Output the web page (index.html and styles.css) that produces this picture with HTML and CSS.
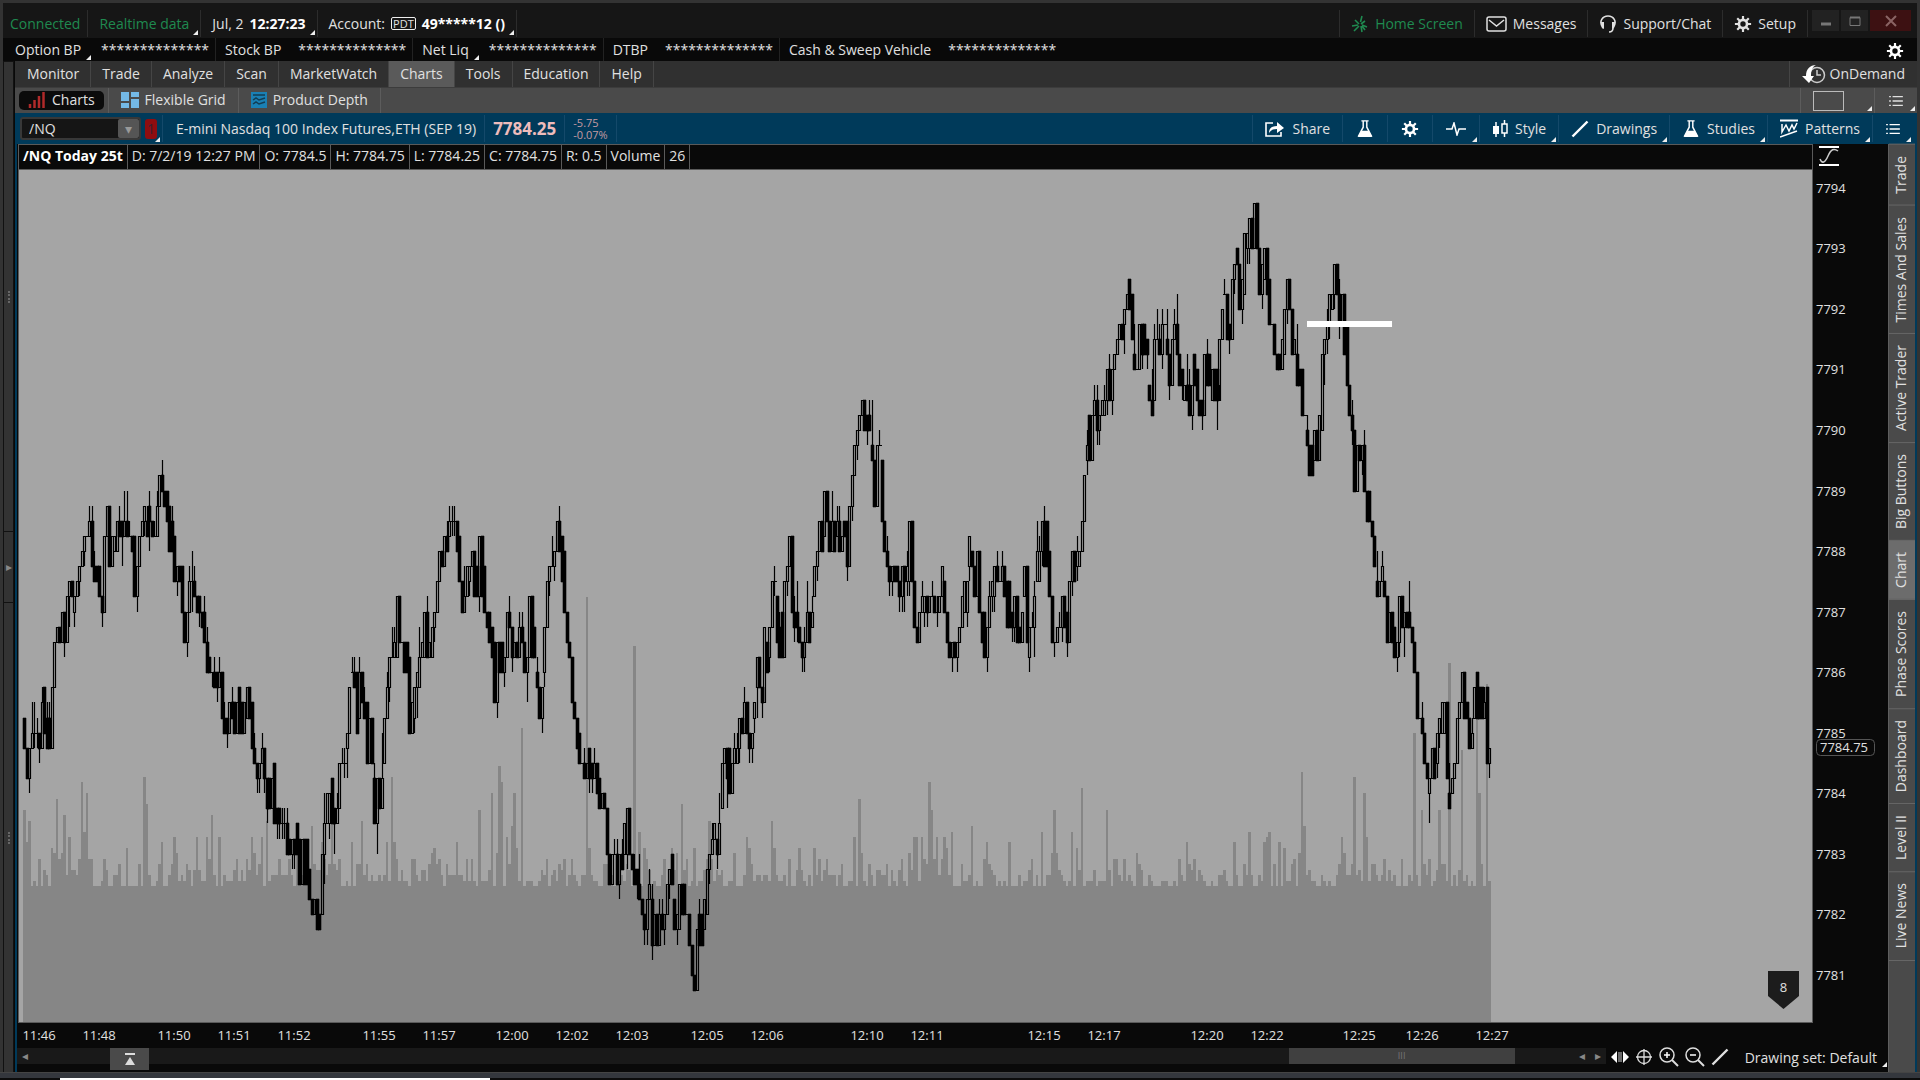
FILE: index.html
```html
<!DOCTYPE html>
<html lang="en">
  <head>
    <meta charset="utf-8">
    <title>Charts - /NQ</title>
    <meta name="viewport" content="width=device-width, initial-scale=1.0">
    <link rel="stylesheet" href="styles.css">
  </head>
  <body>
    <!-- shared icons -->
    <svg class="defs" width="0" height="0">
      <symbol id="gear" viewBox="0 0 20 20">
        <circle cx="10" cy="10" r="4.5" fill="none" stroke="currentColor" stroke-width="3"/>
        <path d="M10 1v4M10 15v4M1 10h4M15 10h4M3.6 3.6l3 3M13.4 13.4l3 3M16.4 3.6l-3 3M6.6 13.4l-3 3" stroke="currentColor" stroke-width="2.4" fill="none"/>
      </symbol>
      <symbol id="flask" viewBox="0 0 20 20">
        <path d="M6 1h8M8 1v7l-5 9.500h14L12 8V1" fill="none" stroke="currentColor" stroke-width="1.600"/>
        <path d="M6 12h8l4 7H2z" fill="currentColor"/>
      </symbol>
      <symbol id="list" viewBox="0 0 16 14">
        <path d="M0 2h2M4 2h12M0 7h2M4 7h12M0 12h2M4 12h12" stroke="currentColor" stroke-width="1.500"/>
      </symbol>
      <symbol id="pen" viewBox="0 0 18 18">
        <path d="M1.500 16.500L16.500 1.500" stroke="currentColor" stroke-width="2.400"/>
      </symbol>
    </svg>

    <div class="window">
      <header class="titlebar">
        <div class="seg green first">Connected</div>
        <div class="seg green more">Realtime data</div>
        <div class="seg more">Jul, 2 <b>12:27:23</b></div>
        <div class="seg more">Account: <span class="pdt">PDT</span> <b>49*****12 ()</b></div>
        <div class="spacer"></div>
        <button class="seg green left">
          <svg width="18" height="18" viewBox="0 0 18 18"><path d="M11 1L9.500 7M4 5l4 4M14 6l-4 3M1 11l6-1M16 12l-5-2M3 16l5-5M10 11l1 6M14 15l-3-4" stroke="currentColor" stroke-width="1.600" fill="none"/></svg>
          Home Screen
        </button>
        <button class="seg left">
          <svg width="21" height="16" viewBox="0 0 21 16"><rect x="1" y="1" width="19" height="14" rx="2" fill="none" stroke="currentColor" stroke-width="1.500"/><path d="M3 4l7.500 6L18 4" fill="none" stroke="currentColor" stroke-width="1.500"/></svg>
          Messages
        </button>
        <button class="seg left">
          <svg width="18" height="20" viewBox="0 0 18 20"><path d="M4 14C-1 7 4 2 9 2s10 5 5 12M14 14c0 3-2 4-4 4" fill="none" stroke="currentColor" stroke-width="1.600"/><path d="M2 8l3 0v7l-2-1zM16 8l-3 0v7l2-1z" fill="currentColor"/></svg>
          Support/Chat
        </button>
        <button class="seg left">
          <svg width="18" height="18"><use href="#gear"/></svg>
          Setup
        </button>
        <div class="winbtns">
          <button aria-label="Minimize"><svg width="12" height="10" viewBox="0 0 12 10"><path d="M1 8h10" stroke="#777" stroke-width="3"/></svg></button>
          <button aria-label="Maximize"><svg width="12" height="10" viewBox="0 0 12 10"><path d="M1 1.500h10v8H1z" fill="none" stroke="#777" stroke-width="1"/><path d="M1 1.500h10" stroke="#777" stroke-width="2"/></svg></button>
          <button class="close" aria-label="Close"><svg width="12" height="12" viewBox="0 0 12 12"><path d="M1 1l10 10M11 1L1 11" stroke="#8a6464" stroke-width="2"/></svg></button>
        </div>
      </header>

      <div class="balances">
        <div class="bal"><span class="more">Option BP</span><span>**************</span></div>
        <div class="bal"><span>Stock BP</span><span>**************</span></div>
        <div class="bal"><span class="more">Net Liq</span><span>**************</span></div>
        <div class="bal"><span>DTBP</span><span>**************</span></div>
        <div class="bal last"><span>Cash &amp; Sweep Vehicle</span><span>**************</span></div>
        <div class="spacer"></div>
        <button class="icon-btn" aria-label="Settings"><svg width="18" height="18"><use href="#gear"/></svg></button>
      </div>

      <div class="workspace">
        <div class="gutter">
          <div class="dots"></div>
          <button aria-label="Expand">&#9656;</button>
          <div class="dots"></div>
        </div>

        <div class="main">
          <nav class="menu">
            <a href="#">Monitor</a>
            <a href="#">Trade</a>
            <a href="#">Analyze</a>
            <a href="#">Scan</a>
            <a href="#">MarketWatch</a>
            <a href="#" class="active">Charts</a>
            <a href="#">Tools</a>
            <a href="#">Education</a>
            <a href="#">Help</a>
            <span class="spacer"></span>
            <a href="#" class="ondemand">
              <svg width="24" height="20" viewBox="0 0 24 20"><circle cx="15" cy="11" r="7.500" fill="none" stroke="#ccc" stroke-width="1.500"/><path d="M15 6v5h4" fill="none" stroke="#ccc" stroke-width="1.500"/><path d="M14 1C8 1 4 5 4 12H0l7 7 5-7H9c0-5 1-9 5-11z" fill="#fff"/></svg>
              OnDemand
            </a>
          </nav>

          <nav class="subtabs">
            <a href="#" class="active">
              <svg width="18" height="18" viewBox="0 0 18 18"><path d="M2 13v4M6.500 9v8M11 5v12M15.500 1v16" stroke="#b02a2a" stroke-width="2.500"/></svg>
              Charts
            </a>
            <a href="#">
              <svg width="18" height="18" viewBox="0 0 18 18"><path d="M0 1h8v9H0zM10 1h8v5h-8zM0 12h8v5H0zM10 8h8v9h-8z" fill="#74b9e6"/></svg>
              Flexible Grid
            </a>
            <a href="#">
              <svg width="16" height="16" viewBox="0 0 16 16"><path d="M0 0h16v16H0z" fill="#1a80b4"/><path d="M2 3h12M2 8l3-2 3 2 6-2M2 12l3-2 3 2 6-2" fill="none" stroke="#123c54" stroke-width="1.500"/></svg>
              Product Depth
            </a>
            <span class="spacer"></span>
            <button class="more layout" aria-label="Grid layout"><span class="frame"></span></button>
            <button class="more listbtn" aria-label="Menu"><svg width="14" height="12"><use href="#list"/></svg></button>
          </nav>

          <div class="content">
            <div class="symbolbar">
              <div class="symbol">
                <input type="text" value="/NQ" aria-label="Symbol">
                <button aria-label="Symbol history">&#9662;</button>
              </div>
              <div class="link more"><span>1</span></div>
              <div class="name">E-mini Nasdaq 100 Index Futures,ETH (SEP 19)</div>
              <div class="last-price">7784.25</div>
              <div class="change"><span>-5.75</span><span>-0.07%</span></div>
              <span class="spacer"></span>
              <div class="tools">
                <button>
                  <svg width="20" height="18" viewBox="0 0 20 18"><path d="M8 3H1v13h15v-4" fill="none" stroke="currentColor" stroke-width="1.600"/><path d="M4 13c0-5 3-7 8-7V2l7 6-7 5V9c-4 0-6 1-8 4z" fill="currentColor"/></svg>
                  Share
                </button>
                <button class="only" aria-label="Edit studies"><svg width="18" height="20"><use href="#flask"/></svg></button>
                <button class="only" aria-label="Chart settings"><svg width="18" height="18"><use href="#gear"/></svg></button>
                <button class="only more" aria-label="Active tools"><svg width="20" height="14" viewBox="0 0 20 14"><path d="M0 7h6l2-6 3 12 2-6h7" fill="none" stroke="currentColor" stroke-width="1.500"/></svg></button>
                <button class="more">
                  <svg width="16" height="18" viewBox="0 0 16 18"><path d="M4 2v15M12.500 0v4M12.500 13v4M10 4h5v9h-5z" fill="none" stroke="currentColor" stroke-width="1.500"/><path d="M1 6h6v8H1z" fill="currentColor"/></svg>
                  Style
                </button>
                <button class="more"><svg width="18" height="18"><use href="#pen"/></svg>Drawings</button>
                <button class="more"><svg width="18" height="20"><use href="#flask"/></svg>Studies</button>
                <button class="more">
                  <svg width="18" height="20" viewBox="0 0 18 20"><path d="M0 1.500h18" stroke="currentColor" stroke-width="2"/><path d="M2 5v8l4-7 3 6 3-6 2 4 3-6M0 18l17-6" fill="none" stroke="currentColor" stroke-width="1.500"/></svg>
                  Patterns
                </button>
                <button class="only more" aria-label="Menu"><svg width="14" height="12"><use href="#list"/></svg></button>
              </div>
            </div>

            <div class="body">
              <div class="chart">
                <div class="plot-col">
                  <div class="info">
                    <span><b>/NQ Today 25t</b></span>
                    <span>D: 7/2/19 12:27 PM</span>
                    <span>O: 7784.5</span>
                    <span>H: 7784.75</span>
                    <span>L: 7784.25</span>
                    <span>C: 7784.75</span>
                    <span>R: 0.5</span>
                    <span>Volume</span>
                    <span>26</span>
                  </div>
                  <div class="plot">
                    <svg id="plot"></svg>
                    <div class="flag">8</div>
                  </div>
                </div>
                <div class="price-col">
                  <svg class="fit" width="20" height="20" viewBox="0 0 20 20"><path d="M0 1h20M0 19h20" stroke="#fff" stroke-width="2"/><path d="M1 13c2 5 5 4 8-3s6-8 10-5" fill="none" stroke="#ccc" stroke-width="1.500"/></svg>
                  <svg id="prices"></svg>
                </div>
              </div>
              <svg id="times"></svg>
              <div class="footer">
                <div class="scroll">
                  <span class="arrow">&#9666;</span>
                  <div class="track"><div class="thumb">III</div></div>
                  <span class="arrow">&#9666;</span>
                  <span class="arrow">&#9656;</span>
                  <button class="pull" aria-label="Show panel"><svg width="12" height="14" viewBox="0 0 12 14"><path d="M1 2h10" stroke="#ddd" stroke-width="2"/><path d="M6 5l5 8H1z" fill="#ddd"/></svg></button>
                </div>
                <div class="zoomtools">
                  <svg width="18" height="18" viewBox="0 0 18 18"><path d="M6 3v12L0 9zM12 3v12l6-6z" fill="#fff"/><path d="M8 4v10M10 4v10" stroke="#ccc"/></svg>
                  <svg width="18" height="18" viewBox="0 0 18 18"><circle cx="9" cy="9" r="6.500" fill="none" stroke="#ddd" stroke-width="1.300"/><path d="M9 1v16M1 9h16" stroke="#ddd" stroke-width="1.300"/></svg>
                  <svg width="20" height="20" viewBox="0 0 20 20"><circle cx="8" cy="8" r="7" fill="none" stroke="#ddd" stroke-width="1.500"/><path d="M13 13l6 6" stroke="#ddd" stroke-width="2"/><path d="M5 8h6M8 5v6" stroke="#fff" stroke-width="1.500"/></svg>
                  <svg width="20" height="20" viewBox="0 0 20 20"><circle cx="8" cy="8" r="7" fill="none" stroke="#ddd" stroke-width="1.500"/><path d="M13 13l6 6" stroke="#ddd" stroke-width="2"/><path d="M5 8h6" stroke="#fff" stroke-width="1.500"/></svg>
                  <svg width="18" height="18"><use href="#pen"/></svg>
                </div>
                <button class="drawset more">Drawing set: Default</button>
              </div>
            </div>

            <nav class="side">
              <a href="#">Trade</a>
              <a href="#">Times And Sales</a>
              <a href="#">Active Trader</a>
              <a href="#">Big Buttons</a>
              <a href="#" class="active">Chart</a>
              <a href="#">Phase Scores</a>
              <a href="#">Dashboard</a>
              <a href="#">Level II</a>
              <a href="#">Live News</a>
              <span></span>
            </nav>
          </div>
        </div>
      </div>
    </div>
    <div class="taskbar"><div></div></div>

    <script src="chart.js"></script>
  </body>
</html>
```
FILE: styles.css
```css
* {
  box-sizing: border-box;
}
body {
  margin: 0;
  height: 100vh;
  display: flex;
  flex-direction: column;
  background: #333;
  color: #e0e0e0;
  font: 14px/20px "Open Sans", "Noto Sans", sans-serif;
  white-space: nowrap;
  overflow: hidden;
}
button, input {
  font: inherit;
  color: inherit;
  background: none;
  border: 0;
  padding: 0;
  margin: 0;
}
a {
  color: inherit;
  text-decoration: none;
}
b {
  color: #fff;
}
svg {
  flex: none;
  display: block;
}
.defs {
  position: absolute;
}
.spacer {
  flex: 1;
}
.window {
  flex: 1;
  display: flex;
  flex-direction: column;
  min-height: 0;
  margin: 3px 3px 0 3px;
  background: #090909;
}

/* white corner mark on things that open a menu */
.more {
  position: relative;
}
.more::after {
  content: "";
  position: absolute;
  right: 2px;
  bottom: 2px;
  border-left: 5px solid transparent;
  border-bottom: 5px solid #eee;
}

/* title bar */
.titlebar {
  display: flex;
  height: 35px;
  background: #161616;
  padding: 7px 0 1px 0;
}
.seg {
  display: flex;
  align-items: center;
  gap: 6px;
  padding: 0 11px;
  border-right: 1px solid #2c2c2c;
}
.seg.first {
  padding: 0 7px;
}
.seg.left {
  border-right: 0;
  border-left: 1px solid #2c2c2c;
}
.green {
  color: #1f8a50;
}
.pdt {
  font-size: 11px;
  line-height: 11px;
  border: 1px solid #eee;
  border-radius: 2px;
  padding: 0 1px;
}
.winbtns {
  display: flex;
  gap: 2px;
  padding: 0 6px 0 4px;
  border-left: 1px solid #2c2c2c;
}
.winbtns button {
  width: 27px;
  height: 21px;
  background: #222;
  display: flex;
  align-items: center;
  justify-content: center;
}
.winbtns .close {
  width: 41px;
  background: #3d1112;
}

/* balances */
.balances {
  display: flex;
  height: 23px;
  padding-left: 12px;
}
.bal {
  display: flex;
  align-items: center;
  padding-right: 6px;
  margin-right: 9px;
  border-right: 1px solid #222;
}
.bal.last {
  border: 0;
}
.bal span:first-child {
  padding-right: 17px;
}
.bal span.more {
  padding-right: 20px;
}
.bal .more::after {
  right: 10px;
  bottom: 0;
}
.icon-btn {
  padding: 3px 13px 0 0;
  color: #fff;
}

/* workspace */
.workspace {
  flex: 1;
  display: flex;
  min-height: 0;
}
.gutter {
  width: 11px;
  background: #333;
  border: solid #111;
  border-width: 1px 1px 0 1px;
  display: flex;
  flex-direction: column;
}
.gutter button {
  height: 72px;
  border: solid #111;
  border-width: 1px 0;
  color: #888;
  font-size: 12px;
}
.dots {
  flex: 1;
  display: flex;
  align-items: center;
  justify-content: center;
}
.dots::before {
  content: "";
  height: 12px;
  border-left: 2px dotted #666;
}
.main {
  flex: 1;
  display: flex;
  flex-direction: column;
  min-width: 0;
  margin-left: 1px;
}
.menu {
  display: flex;
  height: 27px;
  padding-left: 1px;
  background: #303030;
  border-bottom: 1px solid #3c3c3c;
}
.menu a {
  display: flex;
  align-items: center;
  padding: 0 11px;
  border-right: 1px solid #454545;
}
.menu .active {
  background: #5a5a5a;
}
.menu .ondemand {
  gap: 4px;
  padding: 0 12px;
  border-right: 0;
  border-left: 1px solid #454545;
}
.subtabs {
  display: flex;
  height: 25px;
  background: #4a4a4a;
}
.subtabs a {
  display: flex;
  align-items: center;
  gap: 6px;
  padding: 0 12px 1px 12px;
  border-right: 1px solid #5c5c5c;
}
.subtabs .active {
  background: #0b0b0b;
  border: 0;
  border-radius: 5px;
  margin: 3px 4px;
  padding: 0 9px 1px 9px;
}
.subtabs .active + a {
  border-left: 1px solid #5c5c5c;
}
.layout {
  width: 74px;
  padding-left: 12px;
  border-left: 1px solid #5c5c5c;
}
.frame {
  display: block;
  width: 31px;
  height: 20px;
  border: 1px solid #bbb;
}
.listbtn {
  width: 43px;
  padding-left: 14px;
  border-left: 1px solid #5c5c5c;
}

/* chart area */
.content {
  flex: 1;
  min-height: 0;
  display: grid;
  grid-template-columns: 1fr 27px;
  grid-template-rows: 31px 1fr;
  border: solid #003a5a;
  border-width: 0 2px;
}
.symbolbar {
  grid-column: 1 / 3;
  display: flex;
  background: #003a5a;
  padding: 2px 0;
}
.symbolbar > div {
  border-right: 1px solid #14496a;
  display: flex;
  align-items: center;
}
.symbolbar > .symbol {
  width: 121px;
  height: 23px;
  margin: 2px 4px 0 3px;
  background: #151515;
  border: 2px solid #383838;
  border-radius: 3px;
}
.symbol input {
  flex: 1;
  min-width: 0;
  padding-left: 7px;
}
.symbol button {
  width: 21px;
  height: 19px;
  background: #555;
  color: #999;
  border-radius: 2px;
  line-height: 19px;
}
.link {
  width: 18px;
}
.link span {
  width: 12px;
  height: 20px;
  border-radius: 3px;
  background: #8f0d10;
  color: #3b1f30;
  text-align: center;
}
.name {
  padding: 0 8px 0 13px;
}
.last-price {
  padding: 0 8px;
  font-size: 17px;
  font-weight: bold;
  color: #eebcbc;
}
.symbolbar .change {
  flex-direction: column;
  align-items: flex-start;
  justify-content: center;
  padding: 0 8px;
  font-size: 11px;
  line-height: 12px;
  color: #c49aa2;
}
.symbolbar .tools {
  border-right: 0;
  padding-right: 2px;
  align-items: stretch;
}
.tools button {
  display: flex;
  align-items: center;
  gap: 7px;
  padding: 0 12px;
  border-left: 1px solid #14496a;
}
.tools button.only {
  padding: 0 13px;
}
.tools svg {
  color: #fff;
}
.tools button.more::after,
.link.more::after {
  bottom: 0;
}
.body {
  display: flex;
  flex-direction: column;
  min-width: 0;
  min-height: 0;
}
.chart {
  flex: 1;
  min-height: 0;
  display: flex;
}
.plot-col {
  flex: 1;
  min-width: 0;
  margin-left: 1px;
  display: flex;
  flex-direction: column;
  border: 1px solid #5a5a5a;
}
.info {
  display: flex;
  height: 25px;
  border-bottom: 1px solid #5a5a5a;
}
.info span {
  padding: 1px 4px 0 4px;
  border-right: 1px solid #5a5a5a;
}
.plot {
  position: relative;
  flex: 1;
  min-height: 0;
  background: #a5a5a5;
}
.plot svg {
  width: 100%;
  height: 100%;
}
.flag {
  position: absolute;
  right: 13px;
  bottom: 13px;
  width: 31px;
  height: 38px;
  padding-top: 6px;
  text-align: center;
  font-size: 13px;
  background: #1c1c1c;
  clip-path: polygon(0 0, 100% 0, 100% 66%, 50% 100%, 0 66%);
}
.price-col {
  width: 75px;
  position: relative;
}
.price-col #prices {
  width: 100%;
  height: 100%;
}
.fit {
  position: absolute;
  left: 6px;
  top: 2px;
}
#times {
  width: 100%;
  height: 25px;
}
#times text, #prices text {
  font-size: 13px;
  fill: #e0e0e0;
}
.footer {
  display: flex;
  height: 24px;
}
.scroll {
  position: relative;
  flex: 1;
  height: 16px;
  display: flex;
  align-items: center;
  background: #191919;
}
.arrow {
  width: 16px;
  text-align: center;
  color: #888;
  font-size: 12px;
}
.track {
  flex: 1;
  height: 16px;
}
.thumb {
  width: 226px;
  height: 16px;
  margin-left: 81.5%;
  background: #404040;
  color: #777;
  font-size: 9px;
  line-height: 16px;
  text-align: center;
}
.pull {
  position: absolute;
  left: 93px;
  top: 0;
  width: 39px;
  height: 22px;
  background: #4a4a4a;
  display: flex;
  align-items: center;
  justify-content: center;
}
.zoomtools {
  display: flex;
  align-items: center;
  gap: 6px;
  height: 18px;
  padding-left: 5px;
}
.drawset {
  height: 20px;
  padding: 0 11px 0 16px;
}
.drawset.more::after {
  right: 1px;
  bottom: 1px;
}

/* right side tabs */
.side {
  background: #4a4a4a;
  border-left: 1px solid #5e5e5e;
  display: flex;
  flex-direction: column;
}
.side a {
  writing-mode: vertical-rl;
  transform: rotate(180deg);
  padding: 11px 2px;
  border-bottom: 1px solid #666;
}
.side span {
  flex: 1;
  border-top: 1px solid #666;
}
.side .active {
  background: #6c6c6c;
}

.taskbar {
  height: 8px;
  background: #34373d;
  border-top: 1px solid #444;
  border-bottom: 2px solid #0c0c0c;
}
.taskbar div {
  width: 430px;
  height: 2px;
  margin: 5px 0 0 60px;
  background: #fff;
}
```
FILE: chart.js
```js
// Each candle is close, written in quarter-point ticks down from 7793.75.
// It opens at the previous close unless it has "open:", ^ is the high, _ is the low.
const candles = `
34:36 38 36_39 35^33_36 35^33_36 35^34_36 36_37 36:33^32 32:35 34:36^33 34:36^33 32 29 28 29 27 29_30 26 25_28 26
27:26_28 25 24_26 23 22_24 22 21^20 24^20 25^23 24:25 24:26 27_28 22 20 24 24:22 23:22 23:21 22^20 21:22_24
21^19 22^19 22^21 23 22:26 24_27 22 21_22 20_22 21:22^20 20:21^19_23 22^21 22^21 20_22^19 18 19^17 19:20^19 19:21 20:23 21:23^20
22:25 24_26 24:25 24:27 29 27_30 25^24 25^23_27 26^24 27 26:27_28 27:28^27 27:29^26 31^28 30:31 31^31_32 31:32^30 31:32_33 31^30 34
35^33 34:35_36 33 33:34^32 33:35 33 32:35 33:35 33 34:32 34 33:36 36:37^35 38_39 38:37_39 36^35 36:38_39 38:40_41 38:40 38
37:41 40:41_42 40:41_42 41^40_42 41^40_42 43^40 42:43 43:42_44 42:43_44 41:43 42:45 42 42:45 42:45 44:46 47 46 46:48 47:48 47:43
43:41^39_45 39 41:39_42 38:41 40:41_43 41:40^39 40:37 37^36 37^36_38 36:35_38 32 31:31^30 31:32^30 31:35 34:31^30 31:33 33:34^32 33:37 34 37
38:41^37 38_43 40 38^35 37:34 32^31 30_33 30^28 29^28 30:26 29 29 29:31 29:31 30:35 33 34:32_35 32:31_34 32:30^28 29
30:27 30^26 29 30:28 27_29 25 23 24 22 22:23^21 22:21^20 21^20_22 21^20_22 23 22:25 27 26^24 24 25:24_26 23
26 24:26 22_27 26 24:27 28 27:29 28:30 29:33 29_34 29:31 29:31 30_32 27 28^26 30_31 29 30 28^27 28:29^27
31 30_33 26 30 28:30 31:32^30 34 32_35 31:28_32 25 24_26 24^22 24:23_25 21 23^20 22:25 23:27 29 30 33
34 36 35:37 37 38^36 37 36:38_39 37:38_39 38:37^36 37:39 38:40 39 40 43 45 43 43^42 45^42 43_46 43:44^42
43:41 43:40_44 43 44 45^43 44:45_46 46^43 47 48_49 46_49 45^44 46:49^45_50 47 49 49:47^46 48^46 47_49 45 44_46 43:45
46:48 47_49 48:45 47 45:47 47 49 51 52 48 47:49^46 47:49 48:46 47:44 43_45 42^41 41 42:43_44 41^39 40:37
36 38_40 36:39 37 36^35 37:36^35 36:34_37 35 33^32 35 36_37 35_37 34:33_35 32:30_34 32 33_34 33:28 29:31 30:28_31 25
25^24_26 26:29 28:30^27 27:30 25 24_26 22 27 28^26_29 27:28^25_29 29 30_31 30:29^28_31 27^25 29 28:27^26 26:24 23_25 21 23
22:19 21 23 21^19 23 22:21^20 23^20 22 21:22 21:24_25 20 18_21 16 15_17 14 14:13 15 14:15_16 14:15^13 16:17^13
20 16 16^15 17:21 23 24^22 25_26 25:24_26 25 24:25 26_27 26:24_27 24:25_27 25:24^23_26 25:21_26 25 28 29 27 26^25
27:26_28 27_28 26 26^25 27 27_28^26 26 24 25:27 29 30 30:29_31 30 29_31 28 26 27:25 27:25_28 24:22_25 23:24
26 23 27 29 27:30 28_31 26^25 26:25_27 26:24_27 24:25^23 25 25:24^23 26 25:28 25:28 27:28_29 28:26_29 29 28:29 27
26:24 29 30:28_31 28:28^27 28:26^25_30 25:23^21 25:23^22 21_24 24^20 21:24 23:26 29 29:29_30 28 28^27 28:26_29 28 27:29_30 25 23_26
25 24:23^22_25 24:23 21 18 17:16^15_18 14:17 14 14:13^12 15^12_16 14_16 13 14:13^12 11_14 13^10 11_14 10 9 8 9
8:7_10 6 5:7 6:9 10:11^8 11 11:8 10_11 8:10 9:10_11 12:13 14^11 13:9^8 9^7 10^8 8^7_11 8 9:10^7 12_13 9
9:8^7 10^6 12 11:12_13 13:12 13^10 12:14^11 12_15 10:12 11:13 14 13:14_15 10 12^9 10:12 13:11 13 11:13_15 9_12 7
6:6^5 9 8:9_10 5 4_6 3:4 7 5_8 6:2 3:2_4 3:1_4 3 0 3 6 4_7 5:3 6 5:8 8
10 10:11 10:11 9 10:7 5_8 7 10 9 10:12^8 11:12 11:14 14 15:16^14 18 16:18 17:15 17 14 15:10
9_12 8^7_10 6_9 7:6 4_7 6 8^5_9 6 10 8:12 14 15^13_16 19 16 17 16_18 19^15 21 19:21 22
24 25:26^23 25 25:24^23 25:26 29 27 29 28:30 29_31 26_30 28 27_30 28 27:28^25 29 31 31:34 34 34:35^33
37 38 39:38_41 38:36 38 37:35_38 34_36 35:33 35:33 38 39:40^37 39:38 37 34 33 31 34 33:34 36 35^34
34:32 31:34 32:34 32:34 34:33^32 32:37 36_38`.trim().split(/\s+/);

const volume = `
14 8 12 0 1 0 5 0 3 2 0 7 6 16 5 6 13 2 9 3 3 2 5 19 10 17 5 5 0 0 0 1 5 3 0 0 2 2 4 0 0 7 0 0 0 0 4 0 20 15
2 0 0 1 4 8 0 0 2 4 9 6 1 2 1 4 3 0 3 9 3 1 1 9 5 13 2 0 9 0 2 1 1 1 3 5 1 3 1 5 3 9 6 2 4 9 0 12 1 2
2 2 5 2 2 2 5 2 0 8 5 2 4 8 3 11 4 3 3 8 5 2 4 13 4 3 5 0 0 1 0 8 0 4 4 12 2 4 1 2 1 1 2 1 2 8 1 20 8 5
1 3 1 1 0 5 5 2 1 3 3 1 4 6 7 4 5 2 0 4 2 2 2 8 2 2 1 5 1 5 1 0 14 1 1 1 3 17 0 6 22 19 0 9 4 11 17 7 1 29
0 1 1 1 0 0 1 3 2 5 0 2 3 1 4 3 5 0 2 5 2 1 0 2 2 53 7 2 1 1 0 0 4 4 4 2 0 3 1 2 1 4 3 0 44 3 10 0 7 5
3 0 1 0 0 2 5 0 3 7 3 6 0 15 3 5 0 1 7 0 1 1 3 5 12 5 1 3 2 3 0 0 1 1 6 0 0 0 2 9 7 4 1 2 2 1 2 2 1 12
7 2 1 1 2 0 5 0 0 3 7 3 1 0 2 0 7 2 5 1 3 5 2 2 2 0 2 4 0 0 1 1 9 0 16 6 1 0 4 2 0 3 3 2 2 4 0 3 1 0
3 5 1 0 6 3 9 9 1 9 5 4 19 14 5 9 2 5 9 7 2 10 0 0 0 4 1 1 2 11 0 1 0 0 5 8 4 3 2 0 1 0 1 0 8 0 0 0 2 0
1 1 3 5 0 2 0 10 0 2 2 6 14 6 3 2 1 0 1 10 0 7 3 18 0 1 1 1 3 0 1 1 1 14 3 0 5 5 2 1 5 1 2 1 0 6 4 3 0 0
2 1 0 0 0 1 1 1 0 0 1 0 5 2 1 8 4 3 5 1 3 2 1 0 0 1 0 0 2 2 3 1 0 0 8 2 0 0 4 2 10 2 0 0 2 1 8 9 10 0
4 0 8 0 7 1 1 4 5 0 6 21 11 2 3 1 1 0 0 2 1 0 1 0 0 2 4 9 6 2 2 4 20 2 3 1 17 9 1 4 4 2 1 2 5 1 3 1 2 0
0 5 0 0 2 1 28 2 0 14 4 2 5 0 1 3 14 4 4 1 41 0 2 0 3 25 1 2 0 1 0 33 17 4 0 37 1`.trim().split(/\s+/).map(Number);

// candle index under each time label
const times = {
  6: '11:46', 30: '11:48', 60: '11:50', 84: '11:51', 108: '11:52', 142: '11:55', 166: '11:57',
  195: '12:00', 219: '12:02', 243: '12:03', 273: '12:05', 297: '12:06', 337: '12:10', 361: '12:11',
  408: '12:15', 432: '12:17', 473: '12:20', 497: '12:22', 534: '12:25', 559: '12:26', 587: '12:27'
};

const plot = document.querySelector('#plot');
const prices = document.querySelector('#prices');
const timeAxis = document.querySelector('#times');

function draw() {
  const W = plot.clientWidth;
  const H = plot.clientHeight;
  const step = W / 717;
  const tick = H / 56.3;
  const X = i => Math.round(5 + i * step);
  const Y = t => Math.round(33 + t * tick);
  const base = Math.round(H * 0.84);

  let area = `M${X(0) - 1} ${H}`;
  volume.forEach((v, i) => {
    const x = 4 + i * step;
    area += `L${x.toFixed(1)} ${base - v * 5.45}H${(x + step).toFixed(1)}`;
  });
  area += `V${H}Z`;

  let wicks = '', filled = '', hollow = '';
  let prev = 34;
  candles.forEach((c, i) => {
    const m = c.match(/^(?:(\d+):)?(\d+)/);
    const open = m[1] === undefined ? prev : +m[1];
    const close = +m[2];
    const high = c.match(/\^(\d+)/);
    const low = c.match(/_(\d+)/);
    const top = Math.min(open, close), bottom = Math.max(open, close);
    const x = X(i);
    if (high) wicks += `M${x + 0.5} ${Y(+high[1])}V${Y(top)}`;
    if (low) wicks += `M${x + 0.5} ${Y(bottom)}V${Y(+low[1])}`;
    if (open === close) {
      wicks += `M${x - 1} ${Y(open) + 0.5}h4`;
    } else if (close > open) {
      filled += `M${x - 1} ${Y(top)}h3V${Y(bottom) + 1}h-3Z`;
    } else {
      hollow += `M${x - 0.5} ${Y(top) + 0.5}h2V${Y(bottom) + 0.5}h-2Z`;
    }
    prev = close;
  });

  plot.innerHTML = `
    <path d="${area}" fill="#868686" shape-rendering="crispEdges"/>
    <path d="${wicks}" fill="none" stroke="#000" stroke-width="1.2"/>
    <path d="${filled}" fill="#000" stroke="#000" stroke-width="0.6"/>
    <path d="${hollow}" fill="none" stroke="#000" stroke-width="1.2"/>
    <rect x="${X(513)}" y="${Y(8) - 3}" width="${34 * step}" height="6" fill="#fff"/>`;

  // the price axis starts above the plot, level with the info row
  const head = plot.getBoundingClientRect().top - prices.getBoundingClientRect().top;
  let labels = '';
  for (let p = 7794; p > 7780; p--) {
    labels += `<text x="3" y="${head + Y((7793.75 - p) * 4) + 5}">${p}</text>`;
  }
  const last = head + Y(36);
  prices.innerHTML = labels + `
    <rect x="3.5" y="${last - 8.5}" width="58" height="16" rx="4" fill="#090909" stroke="#555"/>
    <text x="7" y="${last + 4}">7784.75</text>`;

  timeAxis.innerHTML = Object.keys(times).map(i =>
    `<text x="${X(+i) + 2}" y="17" text-anchor="middle">${times[i]}</text>`).join('');
}

draw();
window.addEventListener('resize', draw);
```
